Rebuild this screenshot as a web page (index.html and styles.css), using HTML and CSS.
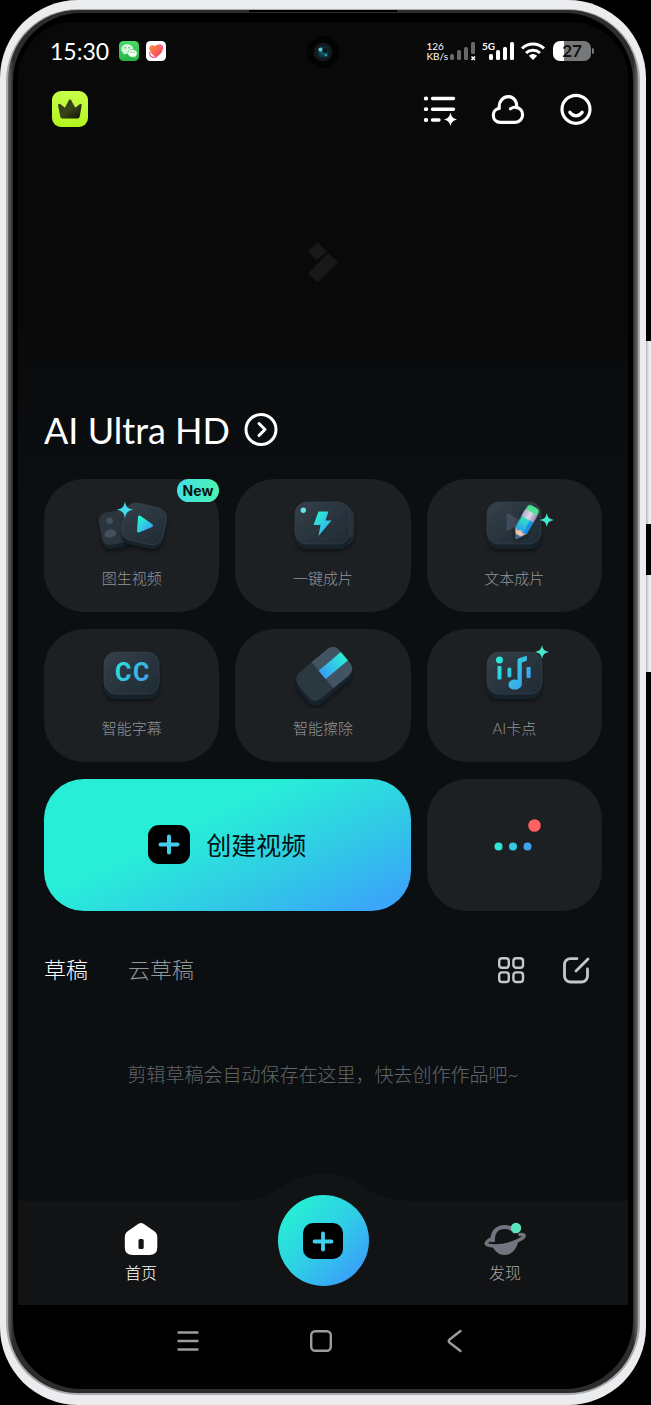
FILE: index.html
```html
<!DOCTYPE html>
<html lang="zh-CN">
<head>
<meta charset="utf-8">
<meta name="viewport" content="width=device-width, initial-scale=1">
<title>AI Ultra HD</title>
<link rel="stylesheet" href="styles.css">
</head>
<body>
<svg class="defs" width="0" height="0" aria-hidden="true">
  <defs>
    <linearGradient id="aqua" x1="0" y1="0" x2="1" y2="1"><stop offset="0.1" stop-color="#2af0d4"/><stop offset="1" stop-color="#3a9cf5"/></linearGradient>
    <linearGradient id="aquaWide" gradientUnits="userSpaceOnUse" x1="20" y1="14" x2="60" y2="42"><stop offset="0" stop-color="#2af0d4"/><stop offset="1" stop-color="#4092f2"/></linearGradient>
    <linearGradient id="band" x1="1" y1="0" x2="0" y2="0"><stop offset="0" stop-color="#2aeed6"/><stop offset="1" stop-color="#399df5"/></linearGradient>
    <linearGradient id="card" x1="0" y1="0" x2="1" y2="1"><stop offset="0" stop-color="#344049"/><stop offset="1" stop-color="#1f2a33"/></linearGradient>
    <linearGradient id="spark" x1="0" y1="0" x2="1" y2="1"><stop offset="0" stop-color="#4ff5b4"/><stop offset="1" stop-color="#35e0e4"/></linearGradient>
    <linearGradient id="pencil" x1="0" y1="0" x2="0" y2="1"><stop offset="0" stop-color="#35e8b8"/><stop offset="1" stop-color="#299ff0"/></linearGradient>
    <linearGradient id="metal" x1="0" y1="0" x2="1" y2="0"><stop offset="0" stop-color="#aaa8c8"/><stop offset="0.5" stop-color="#dedbec"/><stop offset="1" stop-color="#8f8ab0"/></linearGradient>
    <linearGradient id="crown" x1="0" y1="0" x2="1" y2="1"><stop offset="0" stop-color="#2c3512"/><stop offset="0.5" stop-color="#39441a"/><stop offset="1" stop-color="#0f1404"/></linearGradient>
    <linearGradient id="lime" x1="0" y1="0" x2="0" y2="1"><stop offset="0" stop-color="#c8ff4a"/><stop offset="1" stop-color="#b2f51e"/></linearGradient>
    <linearGradient id="wechat" x1="0" y1="0" x2="0" y2="1"><stop offset="0" stop-color="#4fd866"/><stop offset="1" stop-color="#22b544"/></linearGradient>
    <linearGradient id="heart" x1="0" y1="0" x2="1" y2="1"><stop offset="0" stop-color="#ff9045"/><stop offset="1" stop-color="#f83a62"/></linearGradient>
    <radialGradient id="lens"><stop offset="0" stop-color="#1d6f80"/><stop offset="0.6" stop-color="#0b3a45"/><stop offset="1" stop-color="#10161a"/></radialGradient>
    <filter id="soft" x="-30%" y="-30%" width="160%" height="170%"><feDropShadow dx="0" dy="3" stdDeviation="2" flood-color="#000" flood-opacity="0.45"/></filter>
  </defs>
</svg>

<div class="device">
  <span class="side-key side-key-volume"></span>
  <span class="side-key side-key-power"></span>
  <div class="shell">
    <div class="rim">
      <div class="bezel">
        <span class="speaker"></span>
        <div class="glass">
          <div class="screen">
            <svg class="camera" width="34" height="34" viewBox="0 0 34 34" aria-hidden="true">
              <circle cx="17" cy="17" r="16" fill="#020303"/><circle cx="17" cy="17" r="9.500" fill="#15181b"/>
              <circle cx="17" cy="17" r="7" fill="url(#lens)"/><circle cx="14.500" cy="14.500" r="2" fill="#62c9c5"/><circle cx="20" cy="20" r="1.500" fill="#2a93a4"/><circle cx="19" cy="15.500" r="2.500" fill="#06191d"/>
            </svg>

            <div class="status">
              <div class="status-left">
                <time class="clock">15:30</time>
                <div class="status-apps">
                  <svg width="20" height="20" viewBox="0 0 20 20" aria-hidden="true">
                    <rect width="20" height="20" rx="4.500" fill="url(#wechat)"/>
                    <path d="M8.300 3.300c-3.400 0-6 2.100-6 4.900 0 1.600.9 2.900 2.200 3.800l-.5 1.800 2.100-1.100c.7.2 1.400.3 2.200.3 3.400 0 6-2.200 6-4.800s-2.600-4.900-6-4.900z" fill="#d6f8dc"/>
                    <path d="M13.500 8.400c-2.700 0-4.700 1.800-4.700 3.900s2 3.900 4.700 3.900c.6 0 1.200-.1 1.700-.3l1.700.9-.4-1.500c1-.7 1.700-1.800 1.700-3 0-2.100-2-3.900-4.700-3.900z" fill="#fff" stroke="#35c253" stroke-width=".6"/>
                    <g fill="#30bd4f"><circle cx="6.300" cy="6.800" r=".8"/><circle cx="10.200" cy="6.800" r=".8"/><circle cx="12" cy="11.300" r=".7"/><circle cx="15" cy="11.300" r=".7"/></g>
                  </svg>
                  <svg width="20" height="20" viewBox="0 0 20 20" aria-hidden="true">
                    <rect width="20" height="20" rx="4.500" fill="#fff"/>
                    <path d="M10 4.800l4-.8 2.300 1.200.3 3.300M3.600 11l.6 3.800 2.800 1.600 4-.6" fill="none" stroke="#f2468c" stroke-width="1.200"/>
                    <path d="M3.200 7.600C2.800 4.300 6.500 3.200 9 5c3.400-2 7.600 0 7.500 3.600-.1 3.200-3.200 5.400-5.400 7.300C7.500 15.500 3.900 11.800 3.200 7.600z" fill="url(#heart)"/>
                  </svg>
                </div>
              </div>
              <div class="status-right">
                <div class="net-speed"><span>126</span><span>KB/s</span></div>
                <svg width="28" height="20" viewBox="0 0 28 20" aria-hidden="true">
                  <g fill="#67686a"><rect x="1" y="13" width="4" height="6" rx="1.500"/><rect x="8" y="9" width="4" height="10" rx="1.500"/><rect x="15" y="6" width="4" height="13" rx="1.500"/><rect x="22" y="1" width="4" height="12" rx="1.500"/></g>
                  <path d="M22.500 15.500l3.500 3.500M26 15.500L22.500 19" stroke="#fff" stroke-width="1.600"/>
                </svg>
                <div class="cell">
                  <span class="cell-type">5G</span>
                  <svg width="26" height="20" viewBox="0 0 26 20" aria-hidden="true"><g fill="#fff"><rect x="0" y="13" width="4" height="6" rx="1.500"/><rect x="7" y="9" width="4" height="10" rx="1.500"/><rect x="14" y="6" width="4" height="13" rx="1.500"/><rect x="21" y="1" width="4" height="18" rx="1.500"/></g></svg>
                </div>
                <svg width="26" height="20" viewBox="0 0 26 20" aria-hidden="true"><path d="M2 7.500a16 16 0 0 1 22 0M6 12a10.500 10.500 0 0 1 14 0" fill="none" stroke="#fff" stroke-width="3"/><path d="M8.800 14.800a6.500 6.500 0 0 1 8.400 0L13 19z" fill="#fff"/></svg>
                <div class="battery"><span class="battery-level">27</span></div>
              </div>
            </div>

            <header class="topbar">
              <button class="icon-button" aria-label="会员">
                <svg width="36" height="36" viewBox="0 0 36 36"><rect width="36" height="36" rx="9" fill="url(#lime)"/><path d="M6.500 13.200c.6-.6 1.400-.4 2 .1l4.400 3.500 4.100-7.900c.5-.9 1.500-.9 2 0l4.300 7.900 4.300-3.500c.9-.7 2.300-.3 2.100 1l-2 11.200c-.2 1.200-1 1.900-2.200 1.900h-15c-1.200 0-2-.7-2.200-1.900L6.100 14.600c-.1-.6 0-1 .4-1.400z" fill="url(#crown)"/></svg>
              </button>
              <nav class="topbar-actions" aria-label="工具">
                <button class="icon-button" aria-label="任务列表">
                  <svg width="34" height="34" viewBox="0 0 34 34"><g stroke="#fff" stroke-width="3.400" stroke-linecap="round"><path d="M9.500 6.500h21M9.500 17.200h21M9.500 28h6.500"/><path d="M2.700 6.500h.6M2.700 17.200h.6M2.700 28h.6" stroke-width="3.800"/></g><path d="M27.500 20.500c1.300 4.800 2.300 5.800 6.500 7.100-4.200 1.300-5.200 2.300-6.500 6.400-1.300-4.100-2.300-5.100-6.500-6.400 4.200-1.300 5.200-2.300 6.500-7.100z" fill="#fff"/></svg>
                </button>
                <button class="icon-button" aria-label="云空间">
                  <svg width="34" height="34" viewBox="0 0 34 34" fill="none" stroke="#fff" stroke-width="3.200" stroke-linecap="round" stroke-linejoin="round"><path d="M19.500 16.800c1.500-1.100 3.200-1.700 5.100-1.500 4 .3 7 3.400 7 7.500 0 4.200-3.200 7.500-7.500 7.500H9.500c-4.300 0-7.200-3.100-7.200-7 0-3.600 2.600-6.500 6-6.900-1-6.500 3.500-12 9.500-11.700 4.700.3 8.500 4.300 7.800 10.500"/></svg>
                </button>
                <button class="icon-button" aria-label="我的">
                  <svg width="34" height="34" viewBox="0 0 34 34" fill="none" stroke="#fff" stroke-width="3.200" stroke-linecap="round"><circle cx="17" cy="17.300" r="14"/><path d="M10.800 20.300c3.400 4.700 9 4.700 12.400 0"/></svg>
                </button>
              </nav>
            </header>

            <main class="content">
              <div class="hero">
                <svg width="32" height="42" viewBox="0 0 32 42" aria-hidden="true"><path d="M10.500 1L20 10.500 9.500 19.500 1 10.500zM21.500 12L31 21 10.500 41.500 1 32.500z" fill="#16181a"/></svg>
              </div>

              <a class="feature" href="#ultra-hd">
                <h1 class="feature-title">AI Ultra HD</h1>
                <svg width="34" height="34" viewBox="0 0 34 34" fill="none" stroke="#fff" stroke-width="3" stroke-linecap="round" stroke-linejoin="round" aria-hidden="true"><circle cx="17" cy="16.500" r="15"/><path d="M15 10.500l6 6-6 6"/></svg>
              </a>

              <section class="tools" aria-label="创作工具">
                <button class="tool">
                  <span class="badge">New</span>
                  <svg width="80" height="64" viewBox="0 0 80 64" aria-hidden="true">
                    <g filter="url(#soft)"><rect x="9" y="22" width="30" height="32" rx="8" transform="rotate(-10 24 38)" fill="#172029"/><rect x="8" y="17" width="30" height="33" rx="8" transform="rotate(-10 23 33)" fill="#2a343d"/></g>
                    <g fill="#45505e"><circle cx="17.700" cy="26.700" r="3.200"/><path d="M12.500 42c-.4-8 10-9 12-2.500-2 4-8 5.500-12 2.500z"/></g>
                    <g filter="url(#soft)"><rect x="31" y="15" width="42" height="38" rx="11" transform="rotate(13 52 34)" fill="#18222b"/><rect x="31" y="11" width="42" height="38" rx="11" transform="rotate(13 52 30)" fill="url(#card)" stroke="#3a454e" stroke-width=".6"/></g>
                    <path d="M47.500 23l12 8.500-13 5.500z" fill="url(#aqua)" stroke="url(#aqua)" stroke-width="3" stroke-linejoin="round"/>
                    <path d="M33 7.500c1.300 5.500 2.600 6.900 8 8.200-5.400 1.300-6.700 2.700-8 8.200-1.300-5.500-2.600-6.900-8-8.200 5.400-1.300 6.700-2.700 8-8.200z" fill="#45d9ec"/>
                  </svg>
                  <span class="tool-name">图生视频</span>
                </button>
                <button class="tool">
                  <svg width="80" height="64" viewBox="0 0 80 64" aria-hidden="true">
                    <g filter="url(#soft)"><rect x="30" y="14" width="41" height="38" rx="10" fill="#1b262f"/><rect x="30" y="12" width="41" height="35" rx="10" fill="#26313a"/><rect x="12" y="13" width="55" height="42" rx="12" fill="#17212a"/><rect x="12" y="8" width="55" height="42" rx="12" fill="url(#card)" stroke="#3a454e" stroke-width=".6"/></g>
                    <circle cx="20.300" cy="16.300" r="2.700" fill="#5fe8e0"/><path d="M35.500 17.500H45.500L42.500 26.500h6L35.500 42l2-11h-7z" fill="url(#aqua)"/>
                  </svg>
                  <span class="tool-name">一键成片</span>
                </button>
                <button class="tool">
                  <svg width="80" height="64" viewBox="0 0 80 64" aria-hidden="true">
                    <g filter="url(#soft)"><rect x="13" y="13" width="54" height="42" rx="12" fill="#17212a"/><rect x="13" y="8" width="54" height="42" rx="12" fill="url(#card)" stroke="#3a454e" stroke-width=".6"/></g>
                    <path d="M34 21l12 7-12 7z" fill="#414c5a" stroke="#414c5a" stroke-width="3" stroke-linejoin="round"/>
                    <g transform="translate(42 45) rotate(30)" filter="url(#soft)"><path d="M0 0l-6.500-10h13z" fill="#f2c6a6"/><path d="M0 0l-3-4.500h6z" fill="#2b62ad"/><path d="M-6.500-24h13v14l-3.200 2-3.300-2-3.300 2-3.200-2z" fill="url(#pencil)"/><path d="M2.500-24h4v14l-3.200 2z" fill="#1e8ff2"/><rect x="-7" y="-31" width="14" height="8" rx="1" fill="url(#metal)"/><path d="M-6.500-31v-2.500q0-3.500 4-3.500h5q4 0 4 3.500v2.500z" fill="#4ee191"/></g>
                    <path d="M72.800 19c1.100 4.800 2.200 5.900 7 7-4.800 1.100-5.900 2.200-7 7-1.100-4.800-2.200-5.900-7-7 4.800-1.100 5.900-2.200 7-7z" fill="url(#spark)"/>
                  </svg>
                  <span class="tool-name">文本成片</span>
                </button>
                <button class="tool">
                  <svg width="80" height="64" viewBox="0 0 80 64" aria-hidden="true">
                    <g filter="url(#soft)"><rect x="12" y="13" width="55" height="42" rx="12" fill="#17212a"/><rect x="12" y="8" width="55" height="42" rx="12" fill="url(#card)" stroke="#3a454e" stroke-width=".6"/></g>
                    <text class="caption-mark" x="23" y="37" fill="url(#aquaWide)">C</text><text class="caption-mark" x="41" y="37" fill="url(#aquaWide)">C</text>
                  </svg>
                  <span class="tool-name">智能字幕</span>
                </button>
                <button class="tool">
                  <svg width="80" height="64" viewBox="0 0 80 64" aria-hidden="true">
                    <g filter="url(#soft)"><rect x="-27" y="-17" width="54" height="34" rx="9" transform="translate(41 35) rotate(-40)" fill="#17212b"/><g transform="translate(41 30) rotate(-40)"><rect x="-27" y="-17" width="54" height="34" rx="9" fill="#2b3741"/><path d="M-2-17h20q9 0 9 9V8q0 9-9 9H-2z" fill="#435262"/><path d="M-2-6h29V5H-2z" fill="url(#band)"/></g></g>
                  </svg>
                  <span class="tool-name">智能擦除</span>
                </button>
                <button class="tool">
                  <svg width="80" height="64" viewBox="0 0 80 64" aria-hidden="true">
                    <g filter="url(#soft)"><rect x="13" y="13" width="55" height="42" rx="12" fill="#17212a"/><rect x="13" y="8" width="55" height="42" rx="12" fill="url(#card)" stroke="#3a454e" stroke-width=".6"/></g>
                    <g fill="url(#aquaWide)"><circle cx="25.500" cy="16" r="3.500"/><rect x="23.500" y="22" width="4" height="13.500" rx="1"/><rect x="33.500" y="23.700" width="3.800" height="9.500" rx="1"/><path d="M43.500 16.500q0-1.800 1.500-2.300l7.800-2.500v5l-5 1.800V40c0 3.500-3.300 5.500-7 5.500s-6.300-2-6.300-4.800 2.700-5.200 6-5.200c1.100 0 2.100.2 3 .6z"/><rect x="52.500" y="23" width="4.200" height="11" rx="1"/></g>
                    <path d="M68 1c1.100 4.800 2.200 5.900 7 7-4.800 1.100-5.900 2.200-7 7-1.100-4.800-2.200-5.900-7-7 4.800-1.100 5.900-2.200 7-7z" fill="url(#spark)"/>
                  </svg>
                  <span class="tool-name">AI卡点</span>
                </button>
                <button class="create">
                  <svg width="42" height="40" viewBox="0 0 42 40" aria-hidden="true"><rect width="42" height="39" rx="11" fill="#000"/><path d="M21 11.500v16M12.500 19.500h17" stroke="#45cdea" stroke-width="4" stroke-linecap="round"/></svg>
                  <span>创建视频</span>
                </button>
                <button class="tool tool-more" aria-label="更多">
                  <svg width="60" height="60" viewBox="0 0 60 60"><circle cx="14.500" cy="31.500" r="4" fill="#33e3d6"/><circle cx="29" cy="31.500" r="4" fill="#35c8e2"/><circle cx="43.500" cy="31.500" r="4" fill="#3aa5ee"/><circle cx="50.500" cy="10.500" r="6.300" fill="#ff6060"/></svg>
                </button>
              </section>

              <section class="drafts">
                <div class="drafts-bar">
                  <div class="drafts-tabs" role="tablist">
                    <button class="drafts-tab is-active" role="tab" aria-selected="true">草稿</button>
                    <button class="drafts-tab" role="tab" aria-selected="false">云草稿</button>
                  </div>
                  <div class="drafts-actions">
                    <button class="icon-button" aria-label="网格视图"><svg width="28" height="28" viewBox="0 0 28 28" fill="none" stroke="#c4c7cc" stroke-width="2.400"><rect x="2.200" y="2.200" width="9.600" height="9.600" rx="2.800"/><rect x="16.400" y="2.200" width="9.600" height="9.600" rx="2.800"/><rect x="2.200" y="16.400" width="9.600" height="9.600" rx="2.800"/><rect x="16.400" y="16.400" width="9.600" height="9.600" rx="2.800"/></svg></button>
                    <button class="icon-button" aria-label="编辑草稿"><svg width="28" height="28" viewBox="0 0 28 28" fill="none" stroke="#c4c7cc" stroke-width="2.800" stroke-linecap="round"><path d="M15 2.600H8.500a6 6 0 0 0-6 6V20a6 6 0 0 0 6 6h11a6 6 0 0 0 6-6v-7M14 15L26 3"/></svg></button>
                  </div>
                </div>
                <p class="drafts-empty">剪辑草稿会自动保存在这里，快去创作作品吧~</p>
              </section>
            </main>

            <nav class="tabbar" aria-label="主导航">
              <svg class="tabbar-hump" width="160" height="28" viewBox="0 0 160 28" aria-hidden="true"><path d="M0 27C36 27 40 1 80 1s44 26 80 26v1H0z" fill="#121315"/></svg>
              <a class="tab is-active" href="#home">
                <svg width="44" height="34" viewBox="0 0 44 34" aria-hidden="true"><path d="M19.500 1.800q2.500-1.600 5 0L35 9q3.300 2.300 3.300 6.200V25q0 8-8 8H13.800q-8 0-8-8v-9.800Q5.800 11.300 9 9z" fill="#fff"/><rect x="19.500" y="17" width="5.200" height="10" rx="1.500" fill="#121315"/></svg>
                <span>首页</span>
              </a>
              <button class="fab" aria-label="新建">
                <svg width="40" height="36" viewBox="0 0 40 36"><rect width="40" height="36" rx="10" fill="#000"/><path d="M20 10.500v16M11.500 18.500h17" stroke="#3fcff0" stroke-width="3.800" stroke-linecap="round"/></svg>
              </button>
              <a class="tab" href="#discover">
                <svg width="44" height="34" viewBox="0 0 44 34" aria-hidden="true"><path d="M10 20C8.500 10.500 14 5 21.500 5c4.500 0 8.500 2 11 5.500" fill="none" stroke="#71767e" stroke-width="4.200"/><path d="M37 12.500c5-.5 5.500 2 1.500 4.300-8 4.700-19 7.500-29.500 7-7.500-.5-7.500-2.800-1.500-6.500" fill="none" stroke="#71767e" stroke-width="3.400" stroke-linecap="round"/><path d="M9.500 24.500c9.500 0 18-1.900 25.800-5.500C34 27 28.500 33 21.500 33c-5 0-9.500-3.200-12-8.500z" fill="#71767e"/><circle cx="33" cy="6" r="5.200" fill="#5be3bd"/></svg>
                <span>发现</span>
              </a>
            </nav>
          </div>

          <nav class="system-nav" aria-label="系统导航">
            <button class="icon-button" aria-label="最近任务"><svg width="24" height="24" viewBox="0 0 24 24" stroke="#9c9c9c" stroke-width="2.400" stroke-linecap="round"><path d="M2.500 3.500h19M2.500 12h19M2.500 20.500h19"/></svg></button>
            <button class="icon-button" aria-label="主屏幕"><svg width="24" height="24" viewBox="0 0 24 24" fill="none" stroke="#9c9c9c" stroke-width="2.400"><rect x="2.200" y="2.200" width="19.600" height="19.600" rx="4"/></svg></button>
            <button class="icon-button" aria-label="返回"><svg width="24" height="24" viewBox="0 0 24 24" fill="none" stroke="#9c9c9c" stroke-width="2.400" stroke-linecap="round" stroke-linejoin="round"><path d="M18.500 2L7.500 10.500q-1.500 1.500 0 3l11 8.500"/></svg></button>
          </nav>
        </div>
      </div>
    </div>
  </div>
</div>
</body>
</html>
```

FILE: styles.css
```css
*,
*::before,
*::after {
  box-sizing: border-box;
}

body {
  margin: 0;
  background: #000;
  color: #fff;
  font-family: Lato, "Noto Sans CJK SC", sans-serif;
}

svg {
  display: block;
  flex: none;
}

button {
  margin: 0;
  padding: 0;
  border: 0;
  background: none;
  color: inherit;
  font: inherit;
  cursor: pointer;
}

a {
  color: inherit;
  text-decoration: none;
}

.defs {
  position: absolute;
}

/* Device frame */

.device {
  position: relative;
  display: flex;
  min-height: 100vh;
  padding-right: 5px;
}

.shell,
.rim,
.bezel,
.glass {
  display: flex;
  flex: 1;
  min-width: 0;
}

.shell {
  padding: 9px 6px 10px;
  border-radius: 78px;
  background: #ebecee;
}

.rim {
  padding: 1px 2px 2px;
  border-radius: 72px;
  background: #a9aaad;
}

.bezel {
  position: relative;
  padding: 3px 5px 4px;
  border-radius: 70px;
  background: linear-gradient(90deg, #68686a, #2c2c2d 5px, #2c2c2d calc(100% - 5px), #6c6b6d);
}

.glass {
  flex-direction: column;
  padding: 9px 5px 0;
  border-radius: 68px;
  background: #000;
}

.speaker {
  position: absolute;
  top: 0;
  left: 50%;
  width: 148px;
  height: 2px;
  transform: translateX(-50%);
  background: #000;
}

.side-key {
  position: absolute;
  right: 0;
  width: 5px;
  background: linear-gradient(90deg, #b4b5b7, #ebecee 3px);
}

.side-key-volume {
  top: 341px;
  height: 183px;
}

.side-key-power {
  top: 575px;
  height: 97px;
}

/* Screen */

.screen {
  position: relative;
  display: flex;
  flex: 1;
  flex-direction: column;
  border-radius: 56px 56px 0 0;
  background: linear-gradient(#090909 300px, #0a0c0e 380px, #0b0f12 480px);
}

.camera {
  position: absolute;
  top: 13px;
  left: 50%;
  transform: translateX(-50%);
}

.status {
  display: flex;
  align-items: center;
  justify-content: space-between;
  height: 57px;
  padding: 0 34px 0 32px;
}

.status-left,
.status-right,
.status-apps {
  display: flex;
  align-items: center;
}

.status-left {
  gap: 10px;
}

.status-apps {
  gap: 7px;
}

.status-right {
  gap: 5px;
}

.clock {
  font-size: 23px;
  line-height: 28px;
}

.net-speed {
  display: flex;
  flex-direction: column;
  margin-right: -4px;
  font-size: 10px;
  line-height: 10px;
}

.cell {
  position: relative;
  padding-left: 7px;
}

.cell-type {
  position: absolute;
  top: 0;
  left: 0;
  font-size: 10px;
  font-weight: 700;
  line-height: 10px;
}

.battery {
  position: relative;
  width: 38px;
  height: 20px;
  margin: 0 3px 0 2px;
  border-radius: 7px;
  background: linear-gradient(90deg, #fff 11px, #77787a 11px);
  color: #111;
  text-align: center;
}

.battery::after {
  content: "";
  position: absolute;
  top: 7px;
  right: -3px;
  width: 2px;
  height: 6px;
  border-radius: 0 2px 2px 0;
  background: #77787a;
}

.battery-level {
  display: block;
  font-size: 17px;
  font-weight: 700;
  line-height: 20px;
}

.topbar {
  display: flex;
  align-items: center;
  justify-content: space-between;
  height: 59px;
  padding: 0 35px 0 34px;
}

.topbar-actions {
  display: flex;
  gap: 34px;
}

.content {
  display: flex;
  flex: 1;
  flex-direction: column;
  padding: 0 26px;
}

.hero {
  display: flex;
  align-items: center;
  justify-content: center;
  height: 248px;
}

.feature {
  display: flex;
  align-items: center;
  gap: 14px;
  height: 88px;
  margin-bottom: 5px;
}

.feature-title {
  margin: 0;
  font-size: 36px;
  font-weight: 400;
  line-height: 44px;
}

/* Tool grid */

.tools {
  display: grid;
  grid-template-columns: repeat(3, 1fr);
  gap: 17px 16px;
}

.tool {
  position: relative;
  display: flex;
  flex-direction: column;
  align-items: center;
  gap: 10px;
  min-height: 133px;
  padding-top: 15px;
  border-radius: 40px;
  background: #1d2023;
}

.tool-name {
  color: #929498;
  font-size: 15px;
  font-weight: 300;
  line-height: 20px;
}

.tool-more {
  justify-content: center;
  min-height: 132px;
  padding-top: 0;
}

.caption-mark {
  font-family: Roboto, sans-serif;
  font-size: 25px;
  font-weight: 700;
}

.badge {
  position: absolute;
  top: 0;
  right: 0;
  padding: 0 6px;
  border-radius: 12px;
  background: linear-gradient(90deg, #43dfe6, #4cf5ae);
  color: #06120f;
  font-family: Inter, sans-serif;
  font-size: 14px;
  font-weight: 700;
  line-height: 23px;
}

.create {
  display: flex;
  grid-column: span 2;
  align-items: center;
  justify-content: center;
  gap: 16px;
  border-radius: 40px;
  background: linear-gradient(154deg, #28eed8 38%, #32c4e8 72%, #3aa6f8 92%);
  color: #04100f;
  font-size: 25px;
  line-height: 36px;
}

/* Drafts */

.drafts {
  margin-top: 29px;
}

.drafts-bar {
  display: flex;
  align-items: center;
  justify-content: space-between;
  height: 60px;
  padding-right: 12px;
}

.drafts-tabs {
  display: flex;
  gap: 40px;
}

.drafts-tab {
  color: #94969a;
  font-size: 22px;
  font-weight: 300;
  line-height: 32px;
}

.drafts-tab.is-active {
  color: #fff;
}

.drafts-actions {
  display: flex;
  gap: 37px;
}

.drafts-empty {
  margin: 0;
  padding: 60px 0;
  color: #626568;
  font-size: 19px;
  font-weight: 300;
  line-height: 30px;
  text-align: center;
}

/* Bottom navigation */

.tabbar {
  position: relative;
  display: grid;
  grid-template-columns: 1fr 118px 1fr;
  height: 104px;
  background: #121315;
}

.tabbar-hump {
  position: absolute;
  bottom: 100%;
  left: 50%;
  transform: translateX(-50%);
}

.tab {
  display: flex;
  flex-direction: column;
  align-items: center;
  gap: 7px;
  padding-top: 21px;
  color: #a2a4a7;
  font-size: 16px;
  font-weight: 300;
  line-height: 20px;
}

.tab.is-active {
  color: #fff;
}

.fab {
  position: relative;
  display: flex;
  align-items: center;
  justify-content: center;
  justify-self: center;
  width: 91px;
  height: 91px;
  margin-top: -6px;
  border-radius: 50%;
  background: linear-gradient(135deg, #26f0d2 12%, #2fcfe6 50%, #3a9cfa 90%);
}

.system-nav {
  display: flex;
  align-items: center;
  justify-content: center;
  gap: 109px;
  height: 84px;
  padding: 0 4px 12px 0;
}
```
